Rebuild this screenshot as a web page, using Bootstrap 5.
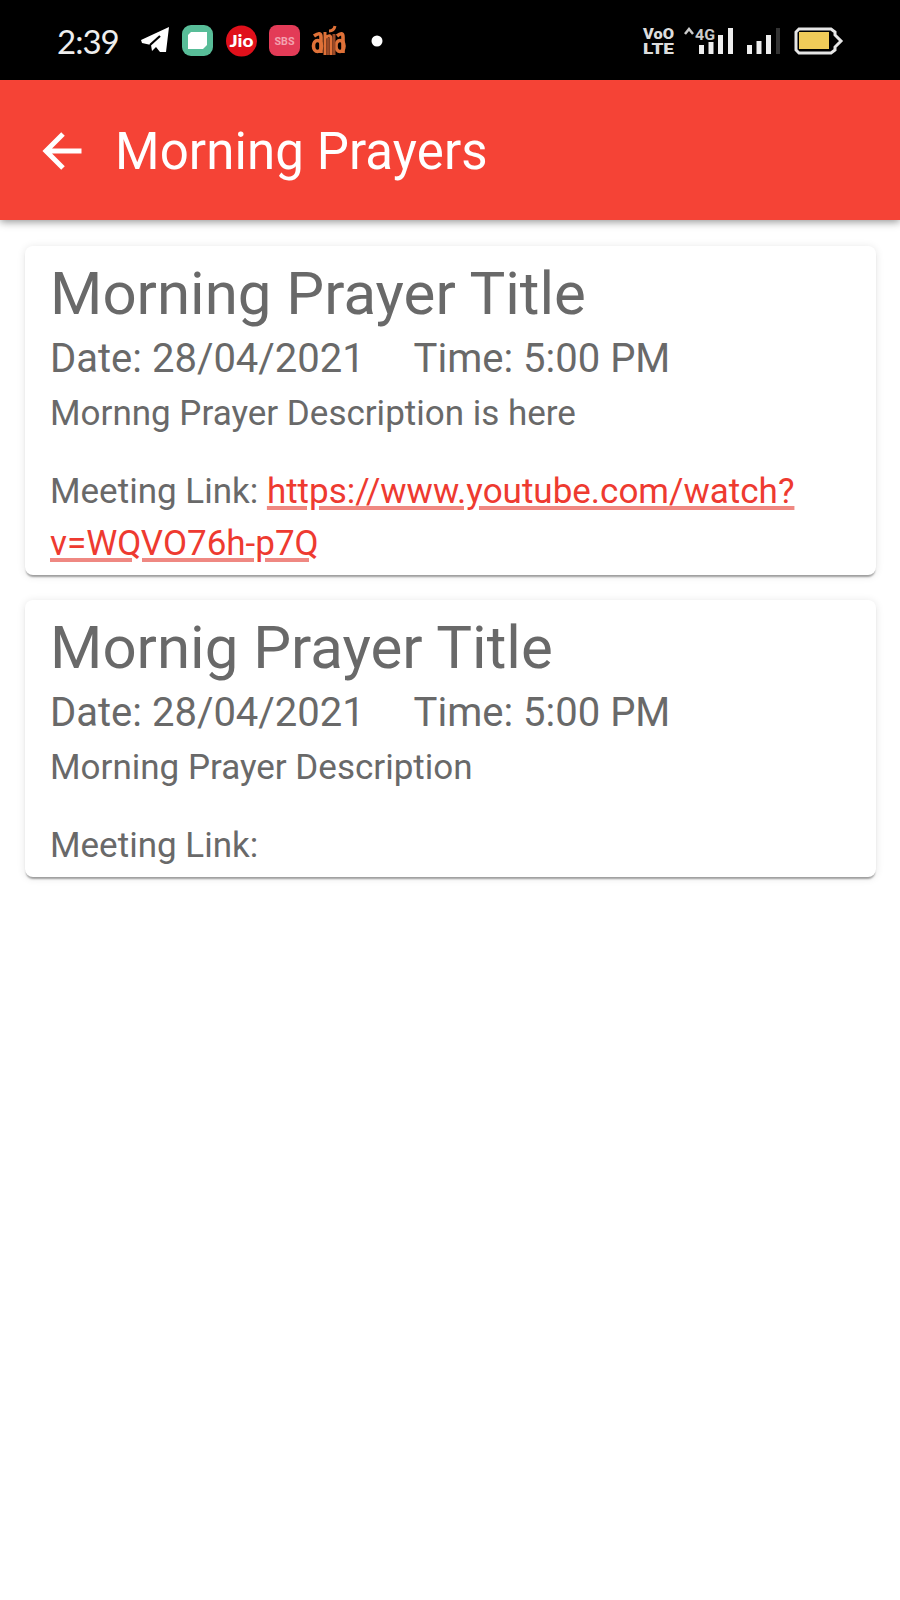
<!DOCTYPE html>
<html lang="en">
<head>
<meta charset="utf-8">
<meta name="viewport" content="width=device-width, initial-scale=1">
<title>Morning Prayers</title>
<link href="https://cdn.jsdelivr.net/npm/bootstrap@5.3.0/dist/css/bootstrap.min.css" rel="stylesheet">
<style>
  body { font-family: Roboto, sans-serif; color: #696969; background: #fff; min-height: 1600px; }
  .status-bar { height: 80px; background: #000; padding: 1px 56px 0 57px; }
  .status-bar svg { display: block; flex: none; }
  .clock { font-family: Lato, sans-serif; font-size: 33px; line-height: 40px; letter-spacing: -1px; color: #eee; width: 81px; }
  .icon-gap { margin-left: 9px; }
  .icon-gap-wide { margin-left: 10px; }
  .dot-gap { margin-left: 22px; }
  .app-bar { height: 140px; background: #f54336; padding: 0 39px; box-shadow: 0 2px 8px rgba(0,0,0,.42); }
  .app-title { font-size: 51px; line-height: 60px; padding-top: 3px; margin-left: 30px; font-weight: 400; letter-spacing: .1px; }
  .back-arrow { margin-top: 2px; }
  .prayers { padding: 26px 24px 0 25px; gap: 25px; }
  .prayer { border: 0; border-radius: 8px; padding: 12px 22px 5px 25px; color: #696969; background: #fff;
    box-shadow: 0 3px 2px -1px rgba(0,0,0,.35), 0 1px 8px rgba(0,0,0,.11); }
  .prayer-title { font-size: 60px; line-height: 71px; font-weight: 400; }
  .prayer-when { font-size: 40px; line-height: 60px; white-space: pre; }
  .prayer-text { font-size: 35px; line-height: 49px; }
  .prayer-link { font-size: 35px; line-height: 52px; margin-top: 28px; }
  .prayer-link a { color: #ee3a30; text-decoration-color: #ef8882; text-decoration-thickness: 4px; text-underline-offset: 3px; }
</style>
</head>
<body>
<header>
  <div class="status-bar d-flex align-items-center justify-content-between">
    <div class="d-flex align-items-center">
      <span class="clock">2:39</span>
      <svg width="34" height="34" viewBox="0 0 34 34"><path d="M3 16 31 3 28 28 22 28 18 23 14 27 13 21 4 19Z" fill="#fff"/><path d="M12 21 22 12" stroke="#000" stroke-width="2.2"/></svg>
      <svg class="ms-2" width="34" height="34" viewBox="0 0 34 34"><rect x="2" y="1" width="31" height="31" rx="9" fill="#58bd98"/><path d="M11 8H27V21L23 25H8V11Z" fill="#fff"/></svg>
      <svg class="icon-gap-wide" width="34" height="34" viewBox="0 0 34 34"><circle cx="17.500" cy="17" r="15.500" fill="#e0101b"/><text x="17.500" y="23" text-anchor="middle" font-family="Lato, sans-serif" font-weight="900" font-size="17" textLength="24" lengthAdjust="spacingAndGlyphs" fill="#fff">Jio</text></svg>
      <svg class="icon-gap" width="34" height="34" viewBox="0 0 34 34"><rect x="2" y="1" width="31" height="31" rx="8" fill="#e33b57"/><text x="17.500" y="21" text-anchor="middle" font-family="Roboto, sans-serif" font-weight="700" font-size="11" textLength="20" lengthAdjust="spacingAndGlyphs" fill="#f3a3b0">SBS</text></svg>
      <svg class="icon-gap-wide" width="36" height="34" viewBox="0 0 36 34"><g fill="none" stroke="#df7138" stroke-width="3.600"><path d="M3 12Q10 7 10 13V29"/><ellipse cx="6.500" cy="22" rx="4" ry="5.500"/><path d="M14 8V31M14 14Q20 9 20 15V31M18 7Q23 7 24 2" stroke-width="3"/><path d="M26 12Q32 7 32 13V29"/><ellipse cx="29" cy="22" rx="4" ry="5.500"/></g><path d="M17 14V31M23 10V31" stroke="#9b4926" stroke-width="3"/></svg>
      <svg class="dot-gap" width="16" height="16" viewBox="0 0 16 16"><circle cx="8" cy="8" r="5.500" fill="#fff"/></svg>
    </div>
    <div class="d-flex align-items-center">
      <svg width="34" height="34" viewBox="0 0 34 34" fill="#ddd" font-family="Roboto, sans-serif" font-weight="900"><text x="1" y="15" font-size="15" textLength="31" lengthAdjust="spacingAndGlyphs">VoO</text><text x="1" y="30" font-size="15" textLength="31" lengthAdjust="spacingAndGlyphs">LTE</text></svg>
      <svg class="ms-2" width="52" height="34" viewBox="0 0 52 34"><path d="M1 10 5 5 9 10" fill="none" stroke="#ccc" stroke-width="2.500"/><text x="11" y="16" font-family="Roboto, sans-serif" font-weight="700" font-size="15" textLength="20" lengthAdjust="spacingAndGlyphs" fill="#ccc">4G</text><path d="M15 21h5v9h-5zM24.500 18h5v12h-5zM34 11h5v19h-5zM44 4h5v26h-5z" fill="#eee"/></svg>
      <svg class="icon-gap" width="38" height="34" viewBox="0 0 38 34"><path d="M2 21h5v9H2zM11.500 17h5v13h-5zM21 11h5v19h-5z" fill="#eee"/><path d="M31 4h4v26h-4z" fill="#333"/></svg>
      <svg class="icon-gap" width="52" height="34" viewBox="0 0 52 34"><path d="M7 5H39L43 8V11L49 17 43 23V26L39 29H7L4 26V8Z" fill="#000" stroke="#e6e6e6" stroke-width="3"/><rect x="7" y="8" width="30" height="17" fill="#f0cb59"/></svg>
    </div>
  </div>
  <nav class="app-bar d-flex align-items-center text-white">
    <svg class="back-arrow" width="46" height="46" viewBox="0 0 46 46"><path d="M42.500 23H8M24 6 7 23 24 40" fill="none" stroke="#fff" stroke-width="5"/></svg>
    <h1 class="app-title mb-0">Morning Prayers</h1>
  </nav>
</header>
<main class="prayers d-flex flex-column">
  <article class="card prayer">
    <h2 class="prayer-title mb-0">Morning Prayer Title</h2>
    <div class="prayer-when">Date: 28/04/2021     Time: 5:00 PM</div>
    <div class="prayer-text">Mornng Prayer Description is here</div>
    <div class="prayer-link">Meeting Link: <a href="https://www.youtube.com/watch?v=WQVO76h-p7Q">https://www.youtube.com/watch?<br>v=WQVO76h-p7Q</a></div>
  </article>
  <article class="card prayer">
    <h2 class="prayer-title mb-0">Mornig Prayer Title</h2>
    <div class="prayer-when">Date: 28/04/2021     Time: 5:00 PM</div>
    <div class="prayer-text">Morning Prayer Description</div>
    <div class="prayer-link">Meeting Link:</div>
  </article>
</main>
<script src="https://cdn.jsdelivr.net/npm/bootstrap@5.3.0/dist/js/bootstrap.bundle.min.js"></script>
</body>
</html>
